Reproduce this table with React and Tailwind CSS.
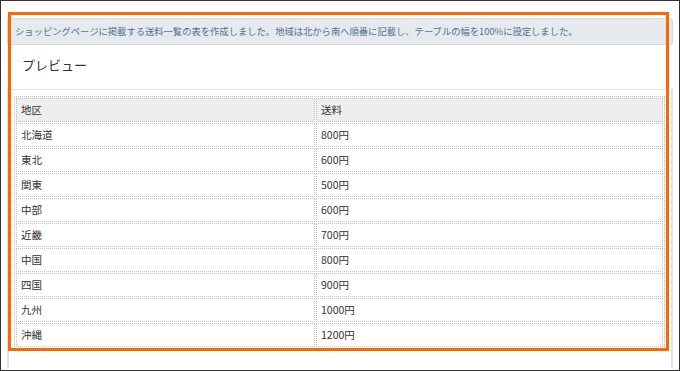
import React from 'react';

const rows = [
  ['北海道', '800円'],
  ['東北', '600円'],
  ['関東', '500円'],
  ['中部', '600円'],
  ['近畿', '700円'],
  ['中国', '800円'],
  ['四国', '900円'],
  ['九州', '1000円'],
  ['沖縄', '1200円'],
];

const font = { fontFamily: '"Noto Sans CJK JP", "Noto Sans", sans-serif' };

export default function App() {
  return (
    <div
      className="relative w-[680px] h-[371px] overflow-hidden border border-[#333] bg-white text-[#333]"
      style={font}
    >
      <div className="flex flex-col pl-[6px] pr-[6px] pt-[17px]">
        {/* notice */}
        <div className="h-[27px] flex items-center pl-[7px] bg-[#e6e9ed] border border-[#d6dade] rounded-r-[3px] text-[9.3px] text-[#4f7392] whitespace-nowrap">
          ショッピングページに掲載する送料一覧の表を作成しました。地域は北から南へ順番に記載し、テーブルの幅を100%に設定しました。
        </div>

        {/* heading */}
        <div className="h-[44px] flex items-center pl-[15px] pb-[4px] text-[13px] text-[#333]">
          プレビュー
        </div>

        {/* preview panel */}
        <div className="h-[279px] border-t border-x-2 border-[#e2e2e2] pl-[5px] pr-[6px] pt-[6px]">
          <table className="w-full border border-dotted border-[#bbb] border-separate border-spacing-[1px] text-[10.5px]">
            <thead>
              <tr className="bg-[#eeeeee]">
                <th className="w-[299px] h-[24px] border border-dotted border-[#c4c4c4] pl-[4px] text-left font-normal">
                  地区
                </th>
                <th className="h-[24px] border border-dotted border-[#c4c4c4] pl-[4px] text-left font-normal">
                  送料
                </th>
              </tr>
            </thead>
            <tbody>
              {rows.map(([area, fee]) => (
                <tr key={area}>
                  <td className="h-[24px] border border-dotted border-[#c4c4c4] pl-[4px]">{area}</td>
                  <td className="h-[24px] border border-dotted border-[#c4c4c4] pl-[4px]">{fee}</td>
                </tr>
              ))}
            </tbody>
          </table>
        </div>
      </div>

      {/* highlight overlay */}
      <div className="absolute left-[7px] top-[11px] w-[661px] h-[339px] border-[3px] border-[#ff6600] pointer-events-none" />
    </div>
  );
}
